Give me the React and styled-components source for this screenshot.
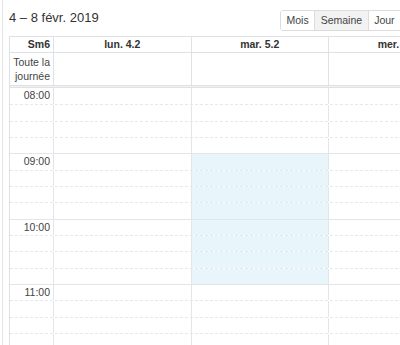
import React from 'react';
import styled, { createGlobalStyle } from 'styled-components';

const GlobalStyle = createGlobalStyle`
  html, body {
    margin: 0;
    padding: 0;
    overflow: hidden;
    background: #fff;
  }
  body {
    font-family: "Liberation Sans", Arial, Helvetica, sans-serif;
    color: #333;
  }
`;

const Page = styled.div`
  width: 760px;
  min-height: 100vh;
  margin-left: 2px;
  padding-left: 6px;
  border-left: 1px solid #e4e4e4;
`;

const Toolbar = styled.div`
  display: flex;
  align-items: flex-start;
  height: 36px;
  padding-top: 10px;
  box-sizing: border-box;
`;

const Title = styled.h2`
  flex: 0 0 271px;
  margin: 0;
  font-size: 13px;
  line-height: 15px;
  font-weight: normal;
  color: #333;
`;

const ButtonGroup = styled.div`
  display: flex;
  border: 1px solid #dcdcdc;
  border-radius: 3px;
  overflow: hidden;
`;

const ViewButton = styled.button`
  height: 19px;
  padding: 0 5.5px;
  border: 0;
  border-left: ${props => (props.first ? '0' : '1px solid #dcdcdc')};
  background: ${props => (props.active ? '#f2f2f2' : '#fff')};
  font-family: inherit;
  font-size: 10.5px;
  line-height: 19px;
  color: #444;
  cursor: pointer;
`;

const Grid = styled.div`
  width: 733px;
  border-left: 1px solid #dfe1e4;
  border-top: 1px solid #dfe1e4;
  font-size: 10.5px;
`;

const Row = styled.div`
  display: grid;
  grid-template-columns: 44px repeat(5, 137.5px);
  box-sizing: border-box;
`;

const HeadRow = styled(Row)`
  border-bottom: 1px solid #dfe1e4;
`;

const HeadCell = styled.div`
  border-right: 1px solid #dfe1e4;
  height: 15px;
  line-height: 15px;
  font-weight: bold;
  text-align: ${props => (props.axis ? 'right' : 'center')};
  padding-right: ${props => (props.axis ? '3px' : '0')};
  white-space: nowrap;
  overflow: hidden;
`;

const AllDayRow = styled(Row)`
  border-bottom: 1px solid #dfe1e4;
`;

const AllDayCell = styled.div`
  border-right: 1px solid #dfe1e4;
  height: 32px;
  padding: 2px 3px 0 0;
  box-sizing: border-box;
  line-height: 14px;
  text-align: right;
  color: #444;
`;

const Divider = styled.div`
  height: 1px;
  background: #f1f1f1;
  border-bottom: 1px solid #dfe1e4;
`;

const SlotRow = styled(Row)`
  height: 16.35px;
  border-top: ${props =>
    props.first ? '0' : props.hour ? '1px solid #e3e5e8' : '1px dashed #e8e8e8'};
`;

const SlotCell = styled.div`
  border-right: 1px solid #e3e5e8;
  background: ${props => (props.highlight ? '#e8f5fa' : 'transparent')};
`;

const TimeLabel = styled(SlotCell)`
  text-align: right;
  padding-right: 3px;
  line-height: 14px;
  color: #444;
  white-space: nowrap;
`;

const days = ['lun. 4.2', 'mar. 5.2', 'mer. 6.2', 'jeu. 7.2', 'ven. 8.2'];

const slots = [];
for (let h = 8; h < 14; h++) {
  for (let q = 0; q < 4; q++) {
    slots.push({ h, q });
  }
}

const pad = n => (n < 10 ? '0' + n : '' + n);

const isHighlighted = (slot, dayIndex) =>
  dayIndex === 1 && (slot.h === 9 || slot.h === 10);

export default function App() {
  return (
    <>
      <GlobalStyle />
      <Page>
        <Toolbar>
          <Title>4 – 8 févr. 2019</Title>
          <ButtonGroup>
            <ViewButton first>Mois</ViewButton>
            <ViewButton active>Semaine</ViewButton>
            <ViewButton>Jour</ViewButton>
            <ViewButton>Liste</ViewButton>
          </ButtonGroup>
        </Toolbar>
        <Grid>
          <HeadRow>
            <HeadCell axis>Sm6</HeadCell>
            {days.map(d => (
              <HeadCell key={d}>{d}</HeadCell>
            ))}
          </HeadRow>
          <AllDayRow>
            <AllDayCell>
              Toute la
              <br />
              journée
            </AllDayCell>
            {days.map(d => (
              <AllDayCell key={d} />
            ))}
          </AllDayRow>
          <Divider />
          {slots.map((slot, i) => (
            <SlotRow key={i} first={i === 0} hour={slot.q === 0}>
              <TimeLabel>{slot.q === 0 ? pad(slot.h) + ':00' : ''}</TimeLabel>
              {days.map((d, di) => (
                <SlotCell key={d} highlight={isHighlighted(slot, di)} />
              ))}
            </SlotRow>
          ))}
        </Grid>
      </Page>
    </>
  );
}
